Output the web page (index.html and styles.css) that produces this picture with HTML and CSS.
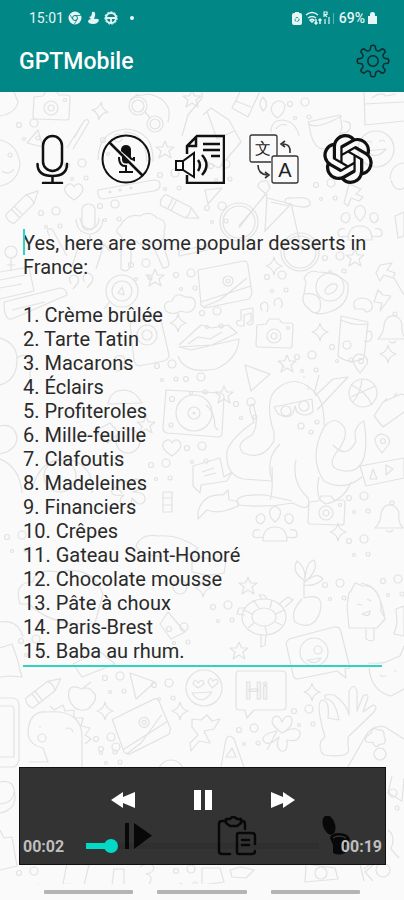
FILE: index.html
```html
<!DOCTYPE html>
<html lang="en">
<head>
  <meta charset="UTF-8">
  <title>GPTMobile</title>
  <meta name="viewport" content="width=device-width, initial-scale=1.0">
  <link rel="stylesheet" href="styles.css">
</head>
<body>

<header class="header">
  <div class="status-bar">
    <div class="status-left">
      <span>15:01</span>
      <svg width="14" height="14" viewBox="0 0 14 14"><circle cx="7" cy="7" r="6.5" fill="#e6f5f5"/><circle cx="7" cy="7" r="2.5" fill="none" stroke="#018786"/><path d="M7 4.5h6M4.800 8.300L2 4M9.200 8.300L6.500 13" stroke="#018786" stroke-width=".8"/></svg>
      <svg width="14" height="14" viewBox="0 0 14 14"><path d="M6 1q4-1 3 4l-1 3q4-1 5 1-1 4-6 4-5 0-5-3 1-2 3-2l-2-2q3 0 3-5z" fill="#e6f5f5"/></svg>
      <svg width="14" height="14" viewBox="0 0 14 14" fill="none" stroke="#e6f5f5"><circle cx="7" cy="7" r="5" stroke-width="2"/><circle cx="7" cy="7" r="6.200" stroke-dasharray="2 1.500"/><path d="M3 7h8M7 7v5" stroke-width="1.800"/></svg>
      <span class="status-dot"></span>
    </div>
    <div class="status-right">
      <svg width="10" height="13" viewBox="0 0 10 13"><path d="M3 0h4v1h1q2 0 2 2v8q0 2-2 2H2q-2 0-2-2V3q0-2 2-2h1z" fill="#e6f5f5"/><circle cx="5" cy="7.500" r="2" fill="none" stroke="#018786" stroke-dasharray="2.500 1"/></svg>
      <svg width="31" height="14" viewBox="0 0 31 14" fill="none" stroke="#e6f5f5" stroke-width="1.500"><path d="M1 4q6-5 12 0M3 7q4-3 8 0M5 9q2-1.500 4 0L7 11z"/><path d="M11 8v5M9.500 11.500L11 13l1.500-1.500M15 13V8M13.500 9.500L15 8l1.500 1.500"/><path d="M19 6V1h3v2.500h-3M22 6l-2-2M20 13V8M24 13V6" stroke-width="1.200"/><path d="M28.500 13V2" stroke-width="1" opacity=".4"/></svg>
      <span class="battery">69%</span>
      <svg width="9" height="12" viewBox="0 0 9 12"><path d="M0 4h2V2q0-2 2.500-2T7 2v2h2v8H0z" fill="#e6f5f5"/></svg>
    </div>
  </div>
  <div class="app-bar">
    <h1>GPTMobile</h1>
    <button type="button" class="icon-btn" aria-label="Settings">
      <svg width="34" height="34" viewBox="-17 -17 34 34" fill="none" stroke="#102a2a" stroke-width="1.500" stroke-linejoin="round">
        <defs><path id="tooth" d="M-4.200-10.200Q-2.700-10.800-2.600-12.300L-2.200-15Q0-16.600 2.200-15L2.600-12.300Q2.700-10.800 4.200-10.200"/></defs>
        <use href="#tooth"/><use href="#tooth" transform="rotate(45)"/><use href="#tooth" transform="rotate(90)"/><use href="#tooth" transform="rotate(135)"/>
        <use href="#tooth" transform="rotate(180)"/><use href="#tooth" transform="rotate(225)"/><use href="#tooth" transform="rotate(270)"/><use href="#tooth" transform="rotate(315)"/>
        <circle r="5.200"/>
      </svg>
    </button>
  </div>
</header>

<main class="chat">
  <svg class="wallpaper" viewBox="0 92 404 808" preserveAspectRatio="xMidYMin slice" aria-hidden="true">
    <defs>
      <g id="camera"><path d="M-17-9l9-1 3-5h10l3 4 9 0q2 0 2 3l-1 20q0 2-3 2l-31-1q-2 0-2-3z"/><circle cy="2" r="7"/><circle cy="2" r="3"/><circle cx="14" cy="-6" r="1.500"/></g>
      <path id="star" d="M0-9l2.500 6 6.500 0-5 4 2 7-6-4-6 4 2-7-5-4 6.500 0z"/>
      <path id="spark" d="M0-9q1 7 8 9-7 2-8 9-1-7-8-9 7-2 8-9z"/>
      <path id="heart" d="M0 8q-14-9-7-15 5-3 7 2 3-5 7-2 6 6-7 15z"/>
      <g id="pencil"><path d="M-20-6h28l12 6-12 6h-28q-4-6 0-12zM8-6q3 6 0 12M-12-6v12M-8-6v12"/></g>
      <g id="pin"><path d="M0 10q-8-10-7-14 3-7 10-4 6 3 4 9z"/><circle cx="1" cy="-2" r="2.500"/></g>
      <g id="bell"><path d="M-14 9q6-6 6-14 2-10 10-9 8 2 8 10-1 8 4 13zM-3 11q3 4 7 0"/><circle cx="3" cy="-16" r="2"/></g>
      <g id="envelope"><path d="M-27-14l46-9q4 0 4 5l4 28-3 5-44 9-4-3zM-24 18l50-16M-22 23l17-7 27-22"/><circle cx="3" cy="-3" r="5"/><circle cx="3" cy="-3" r="2"/></g>
      <g id="balloons"><path d="M-12 14q0-14 12-14t12 14zM0-5q-7-6-5-12 5-7 10 0 2 6-5 12zM-14-3q-7-2-4-8 5-5 8 1 0 5-4 7zM14-3q-5-3-4-8 5-5 8 1 1 5-4 7zM-12 10q-10 2-10-2 0-7 7-5M12 10q10 2 10-2 0-7-7-5"/></g>
      <path id="tri" d="M-12-13l25 9-19 17z"/>
      <g id="dots"><circle cx="-9" cy="-5" r="2.500"/><circle cx="6" cy="-7" r="4"/><circle cx="10" cy="8" r="2"/><circle cx="-4" cy="9" r="1.500"/></g>
      <path id="cloud" d="M-14 8q-5-9 6-10 4-10 13-4 12-1 10 9-3 9-14 5-8 5-15 0z"/>
      <path id="notes" d="M-6 8q-5-1-3-5l4-1V-8l12-2V5q-4 4-6 0l4-2v-8l-7 2v11z"/>
    </defs>
    <g class="doodles">
      <use href="#camera" x="51" y="106"/>
      <use href="#spark" x="100" y="111" transform="rotate(8 100 111)"/>
      <path d="M0 116q16-3 18-14l-4-10M0 140q18 4 20 25-3 18-20 21"/>
      <circle cx="10" cy="155" r="2"/><path d="M2 171q7 5 12-2"/>
      <path d="M27 143l11-13 5 17zM67 148l17-27q4-3 5 1L73 149M74 138l10-17"/>
      <circle cx="138" cy="106" r="9"/><circle cx="155" cy="124" r="8"/><circle cx="138" cy="106" r="6"/><circle cx="155" cy="124" r="5"/><path d="M145 112l5 6M135 96l14-2q25 6 19 28M130 100l8-6"/>
      <path d="M182 136l6-21 14-17v-6M98 160q0-29 28-31 28 2 27 33M124 132q22 0 23 30"/>
      <use href="#star" x="192" y="99"/><use href="#star" x="165" y="150"/>
      <use href="#heart" x="74" y="192"/>
      <path d="M98 190l56-10q7 0 6 6-1 4-6 5l-51 8q-6 0-5-9z"/><circle cx="110" cy="192" r="1"/><circle cx="120" cy="190" r="1"/><circle cx="131" cy="188" r="1"/>
      <use href="#pencil" x="24" y="205" transform="rotate(-45 24 205)"/>
      <use href="#pencil" x="181" y="209" transform="rotate(27 181 209)"/>
      <rect x="82" y="204" width="13" height="26" rx="6"/><path d="M76 219q1 15 15 15 11-2 12-15M80 218q2 11 11 11 8-2 8-11M90 235v5"/>
      <path d="M120 226q7-13 20-10 10-6 17 2 11 2 7 13 2 12-9 9-10 10-19 1-12 5-15-5-8-5-1-10zM121 247v22q8 6 10-7v-14M155 250l8 18q8 0 5-8l-5-15"/><path d="M50 236q-6-8 2-7l15 27M80 242l-9 27M96 269l8-25M104 244l6 7M104 244l-7 5"/>
      <path d="M232 108l11-22 17 5-12 26zM236 101l15 6M263 111q-6-7 0-14 7 8 0 14zM277 118q-9-7-4-14 7-7 12 1 0 9-8 13z"/>
      <path d="M203 115l8-7 18 12 12 22-22 26-18-9M207 111l10 28 17-8"/>
      <path d="M271 132q0-12 12-12 13 2 16 16M276 129q4-6 11-4"/>
      <path d="M309 124q3 25 15 25 13 0 18-22l-2-12-32 7zM309 124q7 6 33-8M343 121q9 0 7 7-2 6-10 5"/>
      <path d="M364 90l1 35 39-4M364 104l40-2M372 98q9-7 14-2l10-2"/>
      <circle cx="376" cy="149" r="18"/><path d="M366 151q10 10 20-2zM366 143q3-4 6 0M379 142q3-4 6 0"/>
      <path d="M390 179q1-15 14-16M391 180q4 13 13 8M205 190l17-2-14 16zM349 184l12 5-5 5 7 3-4 4-8-3-3 8-4-3z"/>
      <circle cx="239" cy="222" r="19"/><circle cx="239" cy="222" r="16"/><circle cx="300" cy="252" r="19"/><circle cx="300" cy="252" r="16"/><path d="M239 226l27-32-8-7q0-7 9-6l3 7-31 40M267 198l-2 33 26-27zM267 194l-2 38M291 203l11 49M271 202l18 4M286 203q-4-6 9-5 16-2 15 7-6 5-24-2z"/>
      <use href="#balloons" x="360" y="226"/><path d="M395 216l9-4v24l-6 2zM179 251l28-6v5l-28 6z"/>
      <path d="M0 272l29-5 5 24-34 8M0 280l25-5M0 288l22-4M4 302l56-14q6 0 7 7l-55 24q-8 2-8-17zM12 310l33-8"/>
      <circle cx="11" cy="252" r="6"/><path d="M11 258v13M7 265h8"/>
      <circle cx="122" cy="291" r="16"/><circle cx="122" cy="291" r="10"/><path d="M110 301l-6 8M118 293l4-6 2 8zM71 284q-4-8 3-9 6 1 4 8l-5 6M84 282q-3-8 4-9 7 2 4 9l-5 6"/>
      <use href="#star" x="155" y="278"/><use href="#cloud" x="180" y="303"/>
      <use href="#envelope" x="225" y="284"/>
      <use href="#spark" x="274" y="266"/><use href="#star" x="355" y="258"/>
      <path d="M304 278q5-9 14-6 20 0 30 12 2 22-19 28-13 5-20-3-9-7-5-15l2-12zM304 294q13-2 16 6 2 13-5 13"/><circle cx="330" cy="287" r="14"/><ellipse cx="331" cy="289" rx="7" ry="4" transform="rotate(-35 331 289)"/>
      <path d="M380 265l12-2-5 7 8 3-2 5-9-3-4 6-4-8zM394 278l10 17M378 290l-4 12 8 1-2 8 11-15-8-1zM355 309q-4-10 7-11 12 1 10 11-6 6-8 0-4 0-9 0z"/>
      <path d="M262 311q-4-8 3-9 5 2 2 10M275 306q-3-7 4-8 5 3 2 10"/><use href="#notes" x="246" y="318"/>
      <use href="#spark" x="178" y="323"/><path d="M179 345l22-20 11 3 16-3 9 8-25 12-33 2 12 3 48-11q-1 20-23 30-31 6-38-13M188 344l10-7 12 2 12-7"/>
      <path d="M130 323l25-7q4 0 6 4l8 35q0 4-5 6l-25 5q-4-1-5-6z"/><circle cx="147" cy="335" r="10"/><circle cx="147" cy="335" r="5"/>
      <use href="#camera" x="274" y="334"/><use href="#spark" x="320" y="332"/>
      <path d="M341 316l27 6-4 36q-13 8-26-2zM341 320q13 6 26 4M366 332q6-3 6 4t-8 5"/><use href="#bell" x="392" y="330"/>
      <path d="M0 338q17 5 17 22 0 20-17 25M17 358q8-6 13 2l0 18M117 371q-7-9 0-15 9-2 8 7-1 8-8 8zM108 404q2-13 15-14 12 0 19 13z"/>
      <use href="#tri" x="257" y="378"/><use href="#star" x="287" y="364"/><use href="#pin" x="360" y="363"/><use href="#spark" x="388" y="354"/>
      <path d="M166 390l54 3q4 1 4 4l-2 36q0 4-4 4l-51-4q-4-1-4-5z"/><circle cx="194" cy="413" r="18"/><circle cx="194" cy="413" r="6"/><circle cx="194" cy="413" r="1"/><circle cx="172" cy="399" r="2.500"/><circle cx="171" cy="425" r="2"/><path d="M206 405q9 7 9 22l3 3"/><use href="#star" x="224" y="395"/>
      <path d="M273 430q-9-32 5-42 16-13 32 0 15 10 14 37M274 407l38-8 1 13q-8 6-16 0l-2-6q-2 16-17 8zM317 410l31-33-15 2-18 17M319 375l-5 19"/><circle cx="286" cy="411" r="5"/><circle cx="304" cy="406" r="5"/>
      <path d="M274 430l0 11q-11 20-31 12-9-9 9-18 8-11 1-31-7 0 1 18-22 15-27 29-2 24 16 28l29 2q-7-23 8-37M272 467q1 27-2 33M296 460q-5 22 12 38 4 16-15 5-27 5-54 2-9-11 26-10l27 6"/><path d="M324 427q11-13 20 0 5 10-8 26-11 16 9 18 27 2 19-50-12 6-8 20-9 19-23 4M324 427q-16 31 0 54 20 11 38-4M319 477q-5 22 7 27 18-4 25-22M283 367h2M303 377h2M307 389h2"/><circle cx="301" cy="426" r="3"/><circle cx="317" cy="422" r="2"/><circle cx="311" cy="432" r="2"/>
      <circle cx="363" cy="393" r="14"/><path d="M351 385q15 6 21 20M362 379q-1 13-9 23M351 397l24-11"/>
      <path d="M374 416l9-14 18-8 3 1M374 416l9 11 21-15M384 402l3-4M394 396l3-3"/><use href="#pin" x="382" y="443"/><use href="#star" x="146" y="425"/><use href="#heart" x="172" y="448"/>
      <path d="M0 426q14-3 17 11 0 13-17 17M0 459q20 8 22 34M32 490q8-33 36-31 27 7 24 34M95 431l15-8 9 10-11 10z"/><circle cx="60" cy="476" r="16"/><circle cx="128" cy="441" r="12"/>
      <path d="M193 466l27-8 4 19 8-5-5 9-26 4-1 8-7-7zM202 472l12-4M204 476l12-3"/><path d="M360 466l44-8v20l-38 8zM373 469l-3 10h7zM386 465v10l7-6z"/>
      <path d="M122 493q-9-9 0-13 6 0 7 9 2-13 11-9 5 8-7 12 13 0 12 8-4 9-13-2-1 13-9 9-6-7 1-12-14 2-12-5 4-6 10 3z"/><path d="M163 492h9v20h-9zM163 498h9M163 505h9M198 512q5-19 25-17l5-5 1 10q11 0 9 6-19 9-31 4l-9 9z"/>
      <use href="#balloons" x="275" y="527"/><use href="#camera" x="326" y="511"/><use href="#bell" x="389" y="519"/><use href="#spark" x="338" y="532"/>
      <path d="M20 604q-7-22 13-22 1-14 26-10 32-8 44 22l-8 29q-41 5-66-19zM136 546q5-13 22-10 21-2 40 12-10 11-31 8-24 2-31-10zM192 556l34 5-2 12q-14 4-32-1z"/>
      <use href="#star" x="248" y="586"/><ellipse cx="264" cy="617" rx="22" ry="18"/><ellipse cx="264" cy="617" rx="12" ry="9"/><path d="M244 610l8 4M253 600l6 8M272 600l-2 8M284 610l-8 4M282 625l-7-3M267 635l-2-9M248 628l6-5M262 599l-3-4 5 0 3 4M285 607l8-7-5-3-9 7M245 615l-8-1 2-6 7 0M261 635l0 12 4-2 1-10"/>
      <path d="M302 599q-12 13-7 23 18 10 25-10 5-20-16-14l0-18q-13-8-7-19 9 6 8 19 1-18 9-20 5 10-9 22 12-11 18-3-8 8-20 6"/>
      <path d="M351 591l4-8 8 3q16-3 22 33l-8 9-28 0-2-22 2-13zM361 583q21 4 20 28l4 7M366 629v10q7 4 8 0v-11M357 604l5 1M367 599l4 2M362 614q8 4 8-3zM396 609l8-3v30l-10-2 3-11z"/>
      <use href="#star" x="239" y="651"/><use href="#spark" x="203" y="588"/><circle cx="180" cy="587" r="7"/>
      <path d="M289 639l45-12q6-1 7 5l9 36-5 1 1 9-9-7-39 8q-5 0-5-5l-7-31z"/><circle cx="314" cy="652" r="14"/><circle cx="318" cy="650" r="4"/><path d="M307 660q9 6 14-2z"/>
      <path d="M368 663q17 1 20-2l12-5 4-10M369 668q2 23 22 28l13-7M380 675q4 3 6 0M394 671h3M0 622q18-3 23 15M0 648l12-4 6 17q1 7 4 16l-12-1-10 1M73 664l26-13 16 13-33 13zM160 624l8-12 17 20-14 7z"/>
      <use href="#pencil" x="45" y="691" transform="rotate(-38 45 691)"/><path d="M82 689q-16-7-13 10 6 15 19 10 12-11 5-17-4-6-11-3zM83 688l8-6"/><use href="#tri" x="142" y="686"/><use href="#spark" x="105" y="711"/><use href="#spark" x="180" y="711"/>
      <circle cx="204" cy="688" r="18"/><path d="M192 693q9 14 20-1zM193 684q2-7 5-1 5-6 6 1l-6 4zM208 682q2-7 5-1 5-4 5 2l-6 5z"/>
      <path d="M239 671h43q4 0 4 4v31q0 4-4 4h-28l-7 8-2-8h-6q-3 0-3-4v-31q0-4 3-4z"/><text x="245" y="699">Hi</text>
      <use href="#spark" x="312" y="692"/><use href="#envelope" x="142" y="726" transform="rotate(-15 142 726)"/>
      <path d="M0 698h13q6 1 6 7v55q-2 7-6 7H0M0 706h11q3 0 3 4v47H0M29 762l19 0-5-14q-13-3-15-13 0-25 19-23 36-3 35 27v28M50 706l4 4 9-5 2 6 9-1 0 8 9 0-2 8 9 2-5 7 6 4-6 5M39 727h2M66 729q5-3 7 3"/><circle cx="42" cy="738" r="4"/>
      <path d="M192 719l9 1 6-5 5 6 8-2-6 10-10 2 6 12-11-2-8 10-1-8 8-8-6-8zM221 767l5-28q3-6 8 0l10 28M226 757h10l-4-9z"/>
      <path d="M282 733q-13-9-9-15 6-5 9 4 3-8 9-5 4 9-9 16 14-8 18-1 1 11-13 8 1 13-6 11-6-4-2-14-12 11-16 3-1-6 14-9l-10 19"/>
      <path d="M325 737q-10-34-3-37 8 0 6 18l11 2q-4-21-13-21-5-6 8-4 13 9 15 20l0-24q5-9 8 0l0 20 6-15q7-4 4 4l-4 12 10-7q6 1 0 8l-25 24v9q5 13-24 9-6-5-3-14z"/>
      <path d="M345 772l20-35q7-13 20-10l19 12M371 733q2-7 7-3 7-1 6 6 4 9-4 8-5 6-7-2-10 2-7-5z"/><circle cx="380" cy="754" r="6"/>
      <path d="M0 782q15-4 15 15 0 13-15 16M0 804q13-1 14-12M0 830l4 8 8-1 5 29-17 4M63 884l4-21 22 2-5 20zM114 869h10v16h-12zM140 867q11-7 14 1-1 5-8 6 9 2 2 12M202 868l18 0 4 14-22 3zM230 870l11-3 13 3-8 8-14-1zM306 864l29 4 3 11-33 3zM360 864l4 17M364 869q9-8 9-4l-8 7 8 9M392 776l-4 17 14 8 2-23M388 830q8 6 3 19l8 9"/><circle cx="171" cy="773" r="13"/><circle cx="321" cy="873" r="6"/><circle cx="383" cy="870" r="7"/>
      <use href="#dots" x="28" y="130"/><use href="#dots" x="112" y="145"/><use href="#dots" x="76" y="170"/><use href="#dots" x="50" y="218"/><use href="#dots" x="109" y="211"/><use href="#dots" x="169" y="180"/><use href="#dots" x="220" y="171"/><use href="#dots" x="299" y="109"/><use href="#dots" x="325" y="190"/><use href="#dots" x="216" y="213"/><use href="#dots" x="140" y="270"/><use href="#dots" x="334" y="263"/><use href="#dots" x="185" y="280"/><use href="#dots" x="276" y="282"/><use href="#dots" x="211" y="318"/><use href="#dots" x="306" y="362"/><use href="#dots" x="341" y="352"/><use href="#dots" x="166" y="371"/><use href="#dots" x="195" y="384"/><use href="#dots" x="245" y="409"/><use href="#dots" x="160" y="470"/><use href="#dots" x="196" y="453"/><use href="#dots" x="16" y="542"/><use href="#dots" x="358" y="503"/><use href="#dots" x="358" y="546"/><use href="#dots" x="392" y="586"/><use href="#dots" x="334" y="590"/><use href="#dots" x="178" y="634"/><use href="#dots" x="222" y="612"/><use href="#dots" x="114" y="683"/><use href="#dots" x="163" y="690"/><use href="#dots" x="30" y="646"/><use href="#dots" x="303" y="716"/><use href="#dots" x="105" y="744"/><use href="#dots" x="248" y="735"/><use href="#dots" x="185" y="876"/><use href="#dots" x="28" y="878"/><use href="#dots" x="387" y="800"/><use href="#dots" x="110" y="754"/>
    </g>
  </svg>

  <nav class="tools" aria-label="Tools">
    <button type="button" class="icon-btn" aria-label="Speak">
      <svg width="50" height="50" viewBox="0 0 50 50" fill="none" stroke="#111" stroke-width="2.500" stroke-linecap="round"><rect x="16" y="2" width="19" height="35" rx="9.500"/><path d="M10.500 30q0 12 15 12 14.500 0 14.500-12M25.500 42v7M16 49h19"/></svg>
    </button>
    <button type="button" class="icon-btn" aria-label="Mute microphone">
      <svg width="50" height="50" viewBox="0 0 50 50" fill="none" stroke="#111" stroke-width="2"><circle cx="25" cy="25" r="23.500"/><path d="M8 8l34 34" stroke-width="2.500"/><path d="M20 15q1-4 5-4t5 4v9q-1 1-2 0l-8-7zM21 25v-3l7 7q-7 2-7-4z" fill="#111" stroke="none"/><path d="M18 23q0 10 8 9M29 24l4 2q0-1 0-3M25 32v6M18 38h14"/></svg>
    </button>
    <button type="button" class="icon-btn" aria-label="Read document aloud">
      <svg width="50" height="50" viewBox="0 0 50 50" fill="none" stroke="#111" stroke-width="2.500"><path d="M12 20v-8L22 2h27v47H12v-8M12 12h9V2M28 10h17M28 16h17M36 22h9"/><path d="M1 27h7l11-8v24L8 36H1zM8 27v9" stroke-width="2"/><path d="M23 26q4 5 0 11M27 21q9 10 0 20"/></svg>
    </button>
    <button type="button" class="icon-btn" aria-label="Translate">
      <svg width="50" height="50" viewBox="0 0 50 50" fill="none" stroke="#333" stroke-width="1.300"><path d="M22 28H3q-2 0-2-2V3q0-2 2-2h23q2 0 2 2v19"/><rect x="23" y="22" width="26" height="27" rx="2"/><path d="M41 19q1-9-7-9M36 7l-4 3 4 3M9 31q0 9 9 10M16 38l4 3-4 3" stroke-width="1.600"/><text class="glyph" x="14" y="20">文</text><text class="glyph glyph-a" x="36" y="43">A</text></svg>
    </button>
    <button type="button" class="icon-btn" aria-label="Ask GPT">
      <svg width="50" height="50" viewBox="0 0 24 24" fill="#111"><path d="M22.2819 9.8211a5.9847 5.9847 0 0 0-.5157-4.9108 6.0462 6.0462 0 0 0-6.5098-2.9A6.0651 6.0651 0 0 0 4.9807 4.1818a5.9847 5.9847 0 0 0-3.9977 2.9 6.0462 6.0462 0 0 0 .7427 7.0966 5.98 5.98 0 0 0 .511 4.9107 6.051 6.051 0 0 0 6.5146 2.9001A5.9847 5.9847 0 0 0 13.2599 24a6.0557 6.0557 0 0 0 5.7718-4.2058 5.9894 5.9894 0 0 0 3.9977-2.9001 6.0557 6.0557 0 0 0-.7475-7.0729zm-9.022 12.6081a4.4755 4.4755 0 0 1-2.8764-1.0408l.1419-.0804 4.7783-2.7582a.7948.7948 0 0 0 .3927-.6813v-6.7369l2.02 1.1686a.071.071 0 0 1 .038.052v5.5826a4.504 4.504 0 0 1-4.4945 4.4944zm-9.6607-4.1254a4.4708 4.4708 0 0 1-.5346-3.0137l.142.0852 4.783 2.7582a.7712.7712 0 0 0 .7806 0l5.8428-3.3685v2.3324a.0804.0804 0 0 1-.0332.0615L9.74 19.9502a4.4992 4.4992 0 0 1-6.1408-1.6464zM2.3408 7.8956a4.485 4.485 0 0 1 2.3655-1.9728V11.6a.7664.7664 0 0 0 .3879.6765l5.8144 3.3543-2.0201 1.1685a.0757.0757 0 0 1-.071 0l-4.8303-2.7865A4.504 4.504 0 0 1 2.3408 7.872zm16.5963 3.8558L13.1038 8.364 15.1192 7.2a.0757.0757 0 0 1 .071 0l4.8303 2.7913a4.4944 4.4944 0 0 1-.6765 8.1042v-5.6772a.79.79 0 0 0-.407-.667zm2.0107-3.0231l-.142-.0852-4.7735-2.7818a.7759.7759 0 0 0-.7854 0L9.409 9.2297V6.8974a.0662.0662 0 0 1 .0284-.0615l4.8303-2.7866a4.4992 4.4992 0 0 1 6.6802 4.66zM8.3065 12.863l-2.02-1.1638a.0804.0804 0 0 1-.038-.0567V6.0742a4.4992 4.4992 0 0 1 7.3757-3.4537l-.142.0805L8.704 5.459a.7948.7948 0 0 0-.3927.6813zm1.0976-2.3654l2.602-1.4998 2.6069 1.4998v2.9994l-2.5974 1.4997-2.6067-1.4997Z"/></svg>
    </button>
  </nav>

  <div class="answer">
    <span class="caret"></span>
    <textarea rows="18" aria-label="Answer" spellcheck="false">Yes, here are some popular desserts in France:

1. Crème brûlée
2. Tarte Tatin
3. Macarons
4. Éclairs
5. Profiteroles
6. Mille-feuille
7. Clafoutis
8. Madeleines
9. Financiers
10. Crêpes
11. Gateau Saint-Honoré
12. Chocolate mousse
13. Pâte à choux
14. Paris-Brest
15. Baba au rhum.</textarea>
  </div>

  <div class="dock">
    <div class="actions">
      <button type="button" class="icon-btn" aria-label="Play answer">
        <svg width="40" height="40" viewBox="0 0 40 40"><path d="M6 7h4v26H6zM15 7l18 12.500L15 33z"/></svg>
      </button>
      <button type="button" class="icon-btn" aria-label="Copy answer">
        <svg width="40" height="40" viewBox="0 0 40 40" fill="none" stroke="#080808" stroke-width="2.500" stroke-linejoin="round" stroke-linecap="round"><path d="M9 5H5q-3 0-3 3v27q0 3 3 3h8M24 5h1q3 0 3 3v5"/><path d="M9 3h4q3-4 7 0h4v4l-4 3h-7L9 7zM25 17h-3q-2 0-2 2v17q0 2 2 2h13q3 0 3-3M25 17h10q3 0 3 3v8M25 24h7M25 29h7"/></svg>
      </button>
      <button type="button" class="icon-btn" aria-label="Record">
        <svg width="40" height="40" viewBox="0 0 40 40"><ellipse cx="14" cy="9" rx="6" ry="10" transform="rotate(-18 14 9)"/><path d="M15 22q1-5 9-5 9 0 11 6-1 5-5 6v8q-6 3-12 0v-8z"/><path d="M18 22q6-4 13 0" fill="none" stroke="#444"/></svg>
      </button>
    </div>
    <section class="player" aria-label="Audio player">
      <div class="controls">
        <button type="button" class="icon-btn" aria-label="Rewind">
          <svg width="32" height="32" viewBox="0 0 32 32" fill="#fff"><path d="M4 16L16 8v5l12-5v16l-12-5v5z"/></svg>
        </button>
        <button type="button" class="icon-btn" aria-label="Pause">
          <svg width="32" height="32" viewBox="0 0 32 32" fill="#fff"><path d="M7 6h7v20H7zM18 6h7v20h-7z"/></svg>
        </button>
        <button type="button" class="icon-btn" aria-label="Fast forward">
          <svg width="32" height="32" viewBox="0 0 32 32" fill="#fff"><path d="M28 16L16 8v5L4 8v16l12-5v5z"/></svg>
        </button>
      </div>
      <div class="seek">
        <span>00:02</span>
        <input type="range" min="0" max="100" value="8" aria-label="Position">
        <span>00:19</span>
      </div>
    </section>
  </div>
</main>

<footer class="nav-bar">
  <span></span>
  <span></span>
  <span></span>
</footer>

</body>
</html>
```
FILE: styles.css
```css
* {
  box-sizing: border-box;
}
body {
  margin: 0;
  min-height: 100vh;
  display: flex;
  flex-direction: column;
  font-family: Roboto, "Noto Sans CJK SC", sans-serif;
  color: #222;
  background: #fafafa;
}
.icon-btn {
  display: flex;
  padding: 0;
  border: none;
  background: none;
  cursor: pointer;
}

/* header */
.header {
  background: #018786;
  color: #fff;
}
.status-bar {
  display: flex;
  justify-content: space-between;
  height: 32px;
  padding: 4px 27px 0 29px;
  font-size: 14px;
  color: #e6f5f5;
}
.status-left,
.status-right {
  display: flex;
  align-items: center;
  gap: 4px;
}
.status-right {
  gap: 3px;
}
.battery {
  font-weight: 500;
}
.status-dot {
  width: 4px;
  height: 4px;
  margin-left: 8px;
  border-radius: 50%;
  background: #e6f5f5;
}
.app-bar {
  display: flex;
  align-items: center;
  justify-content: space-between;
  height: 60px;
  padding: 0 14px 2px 19px;
}
.app-bar h1 {
  margin: 0;
  font-size: 23px;
  font-weight: 500;
}

/* chat */
.chat {
  position: relative;
  flex: 1;
  display: flex;
  flex-direction: column;
  padding: 42px 18px 19px 19px;
  overflow: hidden;
}
.wallpaper {
  position: absolute;
  top: 0;
  left: 0;
  width: 100%;
  height: 100%;
}
.doodles {
  fill: none;
  stroke: #e2e2e2;
  stroke-width: 1.2px;
  stroke-linejoin: round;
}
.doodles text {
  font-size: 24px;
  font-weight: 500;
}
.tools {
  position: relative;
  display: flex;
  justify-content: space-between;
  padding: 0 13px 0 8px;
}
.glyph {
  fill: #222;
  stroke: none;
  font-size: 16px;
  font-weight: 300;
  text-anchor: middle;
}
.glyph-a {
  font-size: 20px;
}
.answer {
  position: relative;
  margin: 47px 4px 0 4px;
}
.answer textarea {
  display: block;
  width: 100%;
  padding: 0 0 2px;
  border: none;
  border-bottom: 2px solid #2ed3c2;
  outline: none;
  resize: none;
  overflow: hidden;
  background: none;
  font-family: inherit;
  font-size: 20px;
  font-weight: 400;
  line-height: 24px;
  color: #2a2a2a;
}
.caret {
  position: absolute;
  top: -2px;
  left: 0;
  width: 2px;
  height: 26px;
  background: #2ed3c2;
}

/* player over the bottom actions */
.dock {
  position: relative;
  display: grid;
  margin-top: auto;
  background: #333;
  border: 1px solid #111;
}
.actions,
.player {
  grid-area: 1 / 1;
}
.actions {
  display: flex;
  align-items: flex-end;
  gap: 58px;
  padding: 0 0 8px 99px;
  fill: #080808;
}
.player {
  padding: 16px 3px 8px;
}
.controls {
  display: flex;
  justify-content: center;
  gap: 48px;
}
.seek {
  display: flex;
  align-items: center;
  gap: 22px;
  height: 20px;
  margin-top: 20px;
  font-size: 16px;
  font-weight: 700;
  color: #bebebe;
}
.seek input {
  flex: 1;
  min-width: 0;
  height: 16px;
  margin: 0;
  appearance: none;
  background: none;
}
.seek input::-webkit-slider-runnable-track {
  height: 6px;
  background: linear-gradient(to right, #03dac5 24px, rgba(0, 0, 0, 0.08) 24px);
}
.seek input::-webkit-slider-thumb {
  appearance: none;
  width: 14px;
  height: 14px;
  margin-top: -4px;
  border-radius: 50%;
  background: #03dac5;
}

/* gesture hints */
.nav-bar {
  display: flex;
  justify-content: center;
  gap: 24px;
  height: 16px;
  padding: 6px 44px;
  background: #fafafa;
}
.nav-bar span {
  flex: 1;
  height: 4px;
  border-radius: 1px;
  background: #b4b4b4;
}
```
